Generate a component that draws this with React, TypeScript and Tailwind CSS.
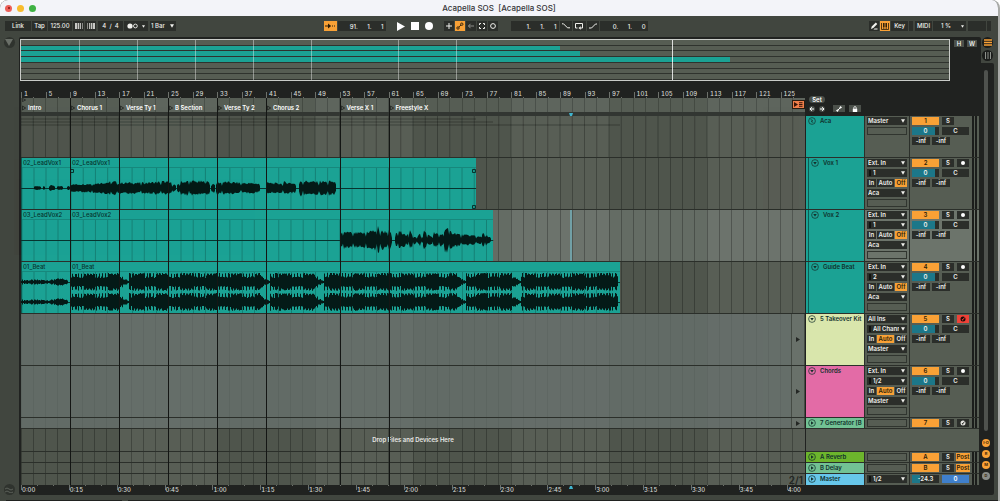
import { ReactNode } from "react";
import clsx from "clsx";

const BARS = 128;
const pct = (bars: number) => `${(bars / BARS) * 100}%`;

const LOCATORS = [
  { bar: 0, name: "Intro" },
  { bar: 8, name: "Chorus 1" },
  { bar: 16, name: "Verse Ty 1" },
  { bar: 24, name: "B Section" },
  { bar: 32, name: "Verse Ty 2" },
  { bar: 40, name: "Chorus 2" },
  { bar: 52, name: "Verse X 1" },
  { bar: 60, name: "Freestyle X" },
];

const PLAYHEAD = 89.8;

// [from, to, start amplitude, end amplitude], on a 784 wide timeline
type Segment = [number, number, number, number];

const VOX1: Segment[] = [
  [13, 20, 2, 2], [22, 24, 3, 2], [28, 34, 3, 3], [36, 42, 2, 2], [46, 49, 2, 3],
  [49, 71, 4, 5], [71, 90, 5, 7], [90, 96, 8, 7], [96, 120, 6, 6], [120, 140, 6, 7],
  [140, 151, 8, 6], [151, 155, 4, 4], [156, 159, 5, 5], [159, 168, 7, 8], [168, 189, 8, 7],
  [190, 194, 4, 6], [195, 201, 7, 6], [201, 220, 7, 6], [220, 239, 6, 5], [245, 262, 6, 5],
  [262, 275, 7, 5], [278, 282, 9, 8], [282, 298, 8, 7], [298, 307, 8, 7], [307, 315, 8, 7],
];

const VOX2: Segment[] = [
  [319, 322, 5, 9], [322, 332, 10, 8], [332, 345, 8, 8], [345, 356, 10, 11], [356, 359, 17, 13],
  [359, 367, 10, 10], [367, 371, 13, 5], [374, 377, 6, 10], [377, 385, 10, 8], [385, 388, 8, 5],
  [388, 392, 12, 6], [392, 396, 5, 3], [396, 400, 4, 8], [400, 402, 4, 4], [402, 406, 12, 8],
  [406, 412, 6, 4], [412, 418, 9, 6], [418, 423, 6, 8], [423, 428, 16, 12], [428, 440, 10, 6],
  [440, 455, 6, 5], [455, 461, 4, 5], [461, 464, 10, 6], [464, 470, 6, 3],
];

const BEAT_DIPS = [107, 248, 302, 444, 499];

// cheap repeatable noise so the waves look the same on each render
function noise(n: number) {
  const v = Math.sin(n * 12.9898) * 43758.5453;
  return v - Math.floor(v);
}

function wavePath(segments: Segment[], mid: number) {
  return segments
    .map(([from, to, a, b]) => {
      const top: string[] = [];
      const bottom: string[] = [];
      for (let x = from; x <= to; x += 1) {
        const amp = a + ((b - a) * (x - from)) / (to - from);
        const fade = x === from || x === to ? 0.5 : 1;
        top.push(`${x} ${(mid - amp * fade * (0.62 + noise(x) * 0.38)).toFixed(1)}`);
        bottom.unshift(`${x} ${(mid + amp * fade * (0.62 + noise(x + 400) * 0.38)).toFixed(1)}`);
      }
      return `M${top.join("L")}L${bottom.join("L")}Z`;
    })
    .join("");
}

function beatPath(mid: number) {
  let d = "";
  for (let x = 0; x < 47; x += 1) {
    const amp = (x > 32 && x < 44 ? 2 : 1) + noise(x) * 1.6;
    d += `M${x} ${mid - amp}h1v${amp * 2}h-1z`;
  }
  for (let x = 49; x < 597; x += 1) {
    const dense = Math.sin((x - 62) / 3.9) > 0.1;
    const hit = x % 3 === 0 || (dense && x % 3 === 1) || noise(x) > 0.85;
    let up = hit ? 8 + noise(x + 9) : dense ? 6.5 + noise(x) : 4 + noise(x) * 2;
    let down = hit ? 7.2 + noise(x + 5) * 1.6 : dense ? 6.5 : 4 + noise(x + 3);
    const dip = BEAT_DIPS.find((e) => x > e - 9 && x <= e);
    if (dip !== undefined) {
      up = 1 + (dip - x) * (0.25 + noise(x) * 0.5);
      down = up;
    }
    d += `M${x} ${(mid - up).toFixed(1)}h1v${(up + down).toFixed(1)}h-1z`;
  }
  return d;
}

type Clip = { name: string; from: number; to: number };

type Track = {
  name: string;
  id: string;
  kind: "group" | "audio" | "midi" | "folded" | "return";
  color: string;
  child?: boolean;
  selected?: boolean;
  input?: string;
  channel?: string;
  monitor?: string;
  output?: string;
  armed?: boolean;
  clips?: Clip[];
  waves?: string[];
  centers?: number[];
};

const TRACKS: Track[] = [
  { name: "Aca", id: "1", kind: "group", color: "bg-[#1ba294]", output: "Master" },
  {
    name: "Vox 1", id: "2", kind: "audio", color: "bg-[#1ba294]", child: true,
    input: "Ext. In", channel: "1", monitor: "Off", output: "Aca",
    clips: [{ name: "02_LeadVox1", from: 0, to: 8 }, { name: "02_LeadVox1", from: 8, to: 74.3 }],
    waves: [wavePath(VOX1, 30)], centers: [30],
  },
  {
    name: "Vox 2", id: "3", kind: "audio", color: "bg-[#1ba294]", child: true, selected: true,
    input: "Ext. In", channel: "1", monitor: "Off", output: "Aca",
    clips: [{ name: "03_LeadVox2", from: 0, to: 8 }, { name: "03_LeadVox2", from: 8, to: 77.1 }],
    waves: [wavePath(VOX2, 30)], centers: [30],
  },
  {
    name: "Guide Beat", id: "4", kind: "audio", color: "bg-[#1ba294]", child: true,
    input: "Ext. In", channel: "2", monitor: "Off", output: "Aca",
    clips: [{ name: "01_Beat", from: 0, to: 8 }, { name: "01_Beat", from: 8, to: 97.8 }],
    waves: [beatPath(20), beatPath(40)], centers: [20, 40],
  },
  {
    name: "5 Takeover Kit", id: "5", kind: "midi", color: "bg-[#d9e6ac]",
    input: "All Ins", channel: "All Channels", monitor: "Auto", output: "Master", armed: true,
  },
  {
    name: "Chords", id: "6", kind: "midi", color: "bg-[#e36ba6]",
    input: "Ext. In", channel: "1/2", monitor: "Auto", output: "Master",
  },
  { name: "7 Generator [B", id: "7", kind: "folded", color: "bg-[#72c294]" },
];

const RETURNS: Track[] = [
  { name: "A Reverb", id: "A", kind: "return", color: "bg-[#6cb52c]" },
  { name: "B Delay", id: "B", kind: "return", color: "bg-[#72c294]" },
];

const laneHeight = {
  group: "h-[42px]",
  audio: "h-[52px]",
  midi: "h-[52px]",
  folded: "h-[11px]",
  return: "h-[11px]",
};

/* ---------- small controls ---------- */

function Btn({ label, className, children }: { label?: string; className?: string; children?: ReactNode }) {
  return (
    <button aria-label={label} className={clsx("flex shrink-0 items-center justify-center whitespace-nowrap", className)}>
      {children}
    </button>
  );
}

function Field({ label, value, className }: { label: string; value: string; className?: string }) {
  return <input aria-label={label} defaultValue={value} className={clsx("min-w-0 outline-none", className)} />;
}

function Drop({ label, value, mark, className }: { label: string; value: string; mark?: boolean; className?: string }) {
  return (
    <label className={clsx("grid shrink-0 items-center bg-[#2b2e2a] text-[#f0f0ec]", className)}>
      <select
        aria-label={label}
        className={clsx("col-start-1 row-start-1 w-full appearance-none overflow-hidden pr-2 outline-none", mark ? "pl-1.5" : "pl-px")}
      >
        <option>{value}</option>
      </select>
      {mark && <span className="col-start-1 row-start-1 ml-0.5 h-1.5 w-0.5 bg-[#111311]" />}
      <svg viewBox="0 0 6 5" className="col-start-1 row-start-1 mr-0.5 h-1 w-1 justify-self-end fill-current">
        <path d="M0 0h6L3 5z" />
      </svg>
    </label>
  );
}

const dark = "bg-[#2b2e2a] text-[#f0f0ec]";
const orange = "bg-[#f9a136] text-[#2a1c08]";

/* ---------- transport ---------- */

function Transport() {
  return (
    <div className="flex h-[21px] items-center pb-px pl-[5px] pr-[7px]">
      <div className="flex h-[10px] gap-px">
        <Btn className={clsx(dark, "w-[26px]")}>Link</Btn>
        <Btn className={clsx(dark, "w-[15px]")}>Tap</Btn>
        <Field label="Tempo" value="125.00" className={clsx(dark, "w-[24px] text-center")} />
        {["down", "up"].map((dir) => (
          <Btn key={dir} label={`Nudge ${dir}`} className={clsx(dark, "w-[11px]")}>
            <svg viewBox="0 0 8 6" className={clsx("h-1.5 w-2 fill-current opacity-80", dir === "up" && "-scale-x-100")}>
              <path d="M0 0h2.4v6H0zM3 0h1.3v6H3zM5 0h.9v6H5zM7 0h.6v6H7z" />
            </svg>
          </Btn>
        ))}
        <Field label="Time signature" value="4  /  4" className={clsx(dark, "ml-px w-[25px] text-center")} />
        <Btn label="Metronome" className={clsx(dark, "w-[24px] gap-1")}>
          <svg viewBox="0 0 11 6" className="h-1.5 w-[11px]">
            <circle cx="3" cy="3" r="2.6" fill="currentColor" />
            <circle cx="8.4" cy="3" r="1.9" fill="none" stroke="currentColor" strokeWidth=".9" />
          </svg>
          <svg viewBox="0 0 6 5" className="h-[3px] w-[3px] fill-current"><path d="M0 0h6L3 5z" /></svg>
        </Btn>
        <Drop label="Quantization" value="1 Bar" className="ml-px w-[26px]" />
      </div>

      <div className="grow-[2]" />

      <div className="flex h-[10px] items-center">
        <Btn label="Follow" className={clsx(orange, "h-full w-[13px]")}>
          <svg viewBox="0 0 10 6" className="h-1.5 w-[10px]" fill="currentColor">
            <path d="M0 2.5h3V.5L6.2 3 3 5.5v-2H0zM7 2.5h1v1H7zM9 2.5h1v1H9z" />
          </svg>
        </Btn>
        <Field label="Arrangement position" value="91.      1.      1" className={clsx(dark, "ml-px h-full w-[48px] pr-0.5 text-right")} />
        <Btn label="Play" className="ml-[10px] h-full w-[10px] text-white">
          <svg viewBox="0 0 8 9" className="h-[9px] w-2 fill-current"><path d="M0 0l8 4.5L0 9z" /></svg>
        </Btn>
        <Btn label="Stop" className="ml-1 h-full w-[10px]">
          <span className="size-2 bg-white" />
        </Btn>
        <Btn label="Record" className="ml-1 h-full w-[10px]">
          <span className="size-2 rounded-full bg-white" />
        </Btn>
        <div className="ml-[10px] flex h-full gap-px">
          <Btn label="Overdub" className={clsx(dark, "w-[10px]")}>
            <svg viewBox="0 0 6 6" className="size-1.5" stroke="currentColor"><path d="M3 0v6M0 3h6" /></svg>
          </Btn>
          <Btn label="Automation arm" className={clsx(orange, "w-[10px]")}>
            <svg viewBox="0 0 8 8" className="size-2" fill="none" stroke="currentColor" strokeWidth=".9">
              <circle cx="2" cy="6" r="1.2" /><circle cx="5.8" cy="2.2" r="1.2" /><path d="M2.8 5.1L5 3" />
            </svg>
          </Btn>
          <Btn label="Re-enable automation" className={clsx(dark, "w-[10px]")}>
            <svg viewBox="0 0 8 6" className="h-1.5 w-2 opacity-50" fill="none" stroke="currentColor">
              <path d="M7 3H1.5M3.5.8L1.5 3l2 2.2" />
            </svg>
          </Btn>
          <Btn label="Capture MIDI" className={clsx(dark, "w-[10px]")}>
            <svg viewBox="0 0 8 8" className="size-2" fill="none" stroke="currentColor">
              <path d="M1.5 3V1.5H3M5 1.5h1.5V3M6.5 5v1.5H5M3 6.5H1.5V5" />
            </svg>
          </Btn>
          <Btn label="Session record" className={clsx(dark, "w-[10px]")}>
            <svg viewBox="0 0 8 8" className="size-2" fill="none" stroke="currentColor"><circle cx="4" cy="4" r="2.4" /></svg>
          </Btn>
        </div>
        <Field label="Loop start" value="1.      1.      1" className={clsx(dark, "ml-[13px] h-full w-[48px] pr-0.5 text-right")} />
        <Btn label="Punch in" className={clsx(dark, "ml-px h-full w-3")}>
          <svg viewBox="0 0 10 6" className="h-1.5 w-[10px]" fill="none" stroke="currentColor"><path d="M1 .8h1.5l4 4H9" /></svg>
        </Btn>
        <Btn label="Loop" className={clsx(dark, "ml-px h-full w-[13px]")}>
          <svg viewBox="0 0 10 8" className="h-2 w-[10px]" fill="none" stroke="currentColor">
            <path d="M3.5 6H1.5V1.5h7V6H7" /><path d="M6.8 4.2L4.4 6l2.4 1.8z" fill="currentColor" stroke="none" />
          </svg>
        </Btn>
        <Btn label="Punch out" className={clsx(dark, "ml-px h-full w-3")}>
          <svg viewBox="0 0 10 6" className="h-1.5 w-[10px]" fill="none" stroke="currentColor"><path d="M1 5h2.5l4-4H9" /></svg>
        </Btn>
        <Field label="Loop length" value="0.      1.      0" className={clsx(dark, "ml-px h-full w-[48px] pr-0.5 text-right")} />
      </div>

      <div className="grow-[3]" />

      <div className="flex h-[10px] gap-px">
        <Btn label="Draw mode" className={clsx(dark, "w-[10px]")}>
          <svg viewBox="0 0 8 8" className="size-2 fill-current"><path d="M1 7l.7-2.5L5.8.5l1.5 1.5-4 4zM4.5 6.5h3v1h-4z" /></svg>
        </Btn>
        <Btn label="Computer MIDI keyboard" className={clsx(orange, "w-[10px]")}>
          <svg viewBox="0 0 8 8" className="size-2" fill="none" stroke="currentColor">
            <path d="M.5 1v6.5h7V1M2.8 5v2M5.2 5v2" strokeWidth=".8" /><path d="M2.8 1v4M5.2 1v4" strokeWidth="1.5" />
          </svg>
        </Btn>
        <Btn className={clsx(dark, "w-[17px]")}>Key</Btn>
        <div className="w-1 bg-[#2b2e2a]" />
        <Btn className={clsx(dark, "ml-px w-[17px]")}>MIDI</Btn>
        <label className="grid w-[33px] items-center bg-[#2b2e2a] text-[#f0f0ec]">
          <select aria-label="CPU load" className="col-start-1 row-start-1 appearance-none pl-2 outline-none">
            <option>1 %</option>
          </select>
          <svg viewBox="0 0 6 5" className="col-start-1 row-start-1 mr-0.5 h-[3px] w-[3px] justify-self-end fill-current">
            <path d="M0 0h6L3 5z" />
          </svg>
        </label>
        <div className="ml-px w-[18px] bg-[#2b2e2a]" />
        <div className="w-1 bg-[#2b2e2a]" />
      </div>
    </div>
  );
}

/* ---------- overview ---------- */

function Overview() {
  const rows = [0, 74.3, 77.1, 97.8, 0, 0, 0];
  return (
    <div className="flex gap-1 pl-px">
      <div className="relative flex h-[42px] min-w-0 flex-1 flex-col border border-[#c9ccc8] bg-[#2f332e]">
        {rows.map((len, i) => (
          <div key={i} className="mb-px flex-1 bg-[#565d53]">
            <div className="h-full bg-[#1ba294]" style={{ width: pct(len) }} />
          </div>
        ))}
        {LOCATORS.slice(1).map((l) => (
          <div key={l.bar} className="absolute inset-y-0 w-px bg-white/40" style={{ left: pct(l.bar) }} />
        ))}
        <div className="absolute inset-y-0 w-px bg-white/80" style={{ left: pct(PLAYHEAD) }} />
      </div>
      <div className="flex w-[27px] gap-[3px] pt-px">
        <Btn className="h-[7px] w-[10px] bg-[#4b504a] text-white">H</Btn>
        <Btn className="h-[7px] w-[10px] bg-[#4b504a] text-white">W</Btn>
      </div>
    </div>
  );
}

/* ---------- timeline ---------- */

function Bands({ className }: { className?: string }) {
  return (
    <div className={clsx("absolute inset-0 flex", className)}>
      {Array.from({ length: 8 }, (_, i) => (
        <div key={i} className={clsx("flex-1", i % 2 === 1 && "bg-white/5")} />
      ))}
    </div>
  );
}

function Grid({ from = 0, to = BARS, className }: { from?: number; to?: number; className?: string }) {
  const lines: number[] = [];
  for (let b = Math.ceil(from / 2) * 2; b < to; b += 2) lines.push(b);
  return (
    <svg viewBox={`${from} 0 ${to - from} 1`} preserveAspectRatio="none" className={clsx("size-full", className)}>
      {lines.map((b) => (
        <path key={b} d={`M${b} 0v1`} stroke="#000" vectorEffect="non-scaling-stroke" shapeRendering="crispEdges" />
      ))}
    </svg>
  );
}

function PlayCell() {
  return (
    <button aria-label="Back to arrangement" className="absolute inset-y-0 right-0 flex w-[14px] items-center justify-center border-x border-[#454b44] bg-[#69716a]">
      <svg viewBox="0 0 4 5" className="h-[5px] w-1 fill-[#242724]"><path d="M0 0l4 2.5L0 5z" /></svg>
    </button>
  );
}

function Lane({ track }: { track: Track }) {
  const soft = track.kind === "midi" || track.kind === "folded";
  return (
    <div
      className={clsx(
        "relative border-b border-[#2b2f2a]",
        laneHeight[track.kind],
        soft ? "bg-[#626b66]" : track.selected ? "bg-[#646c64]" : "bg-[#4f554c]"
      )}
    >
      <Bands className={soft ? "opacity-40" : undefined} />
      <div className="absolute inset-0">
        <Grid className={soft ? "opacity-5" : "opacity-25"} />
      </div>
      {track.kind === "group" && (
        <div className="absolute inset-x-0 top-0.5 flex flex-col gap-px">
          {[74.3, 77.1, 97.8].map((len) => (
            <div key={len} className="h-0.5 bg-black/15" style={{ width: pct(len) }} />
          ))}
        </div>
      )}
      {track.clips?.map((c) => (
        <div
          key={c.from}
          className="absolute inset-y-0 flex flex-col border-l border-[#0e5c53] bg-[#1ba294]"
          style={{ left: pct(c.from), width: pct(c.to - c.from) }}
        >
          <span className="h-[10px] shrink-0 truncate border-b border-[#17887c] pl-px font-medium leading-[10px] text-[#07332e]">{c.name}</span>
          <div className="min-h-0 flex-1">
            <Grid from={c.from} to={c.to} className="opacity-20" />
          </div>
        </div>
      ))}
      {track.waves && (
        <svg viewBox="0 0 784 52" preserveAspectRatio="none" className="absolute inset-x-0 top-0 h-[52px] w-full">
          {track.centers?.map((y) => (
            <path key={y} d={`M0 ${y + 0.5}H${(track.clips![1].to / BARS) * 784}`} stroke="#06342f" />
          ))}
          {track.waves.map((d, i) => (
            <path key={i} d={d} fill="#041a17" />
          ))}
          {track.id === "2" && (
            <path d="M49.5 11.5h3v3h-3zM451.5 11.5h3v3h-3zM451.5 47.5h3v3h-3z" fill="none" stroke="#06342f" />
          )}
        </svg>
      )}
      {track.selected && <div className="absolute inset-y-0 w-0.5 -translate-x-1/2 bg-[#71a0a6]" style={{ left: pct(PLAYHEAD) }} />}
      {soft && <PlayCell />}
    </div>
  );
}

function BarRuler() {
  return (
    <div className="relative h-[17px] tabular-nums text-[#d2d5d0]">
      {Array.from({ length: 32 }, (_, i) => (
        <span key={i} className="absolute bottom-0 h-1.5 border-l border-[#6d716b] pl-0.5 leading-1" style={{ left: pct(i * 4) }}>
          {i * 4 + 1}
        </span>
      ))}
      {Array.from({ length: 32 }, (_, i) => (
        <span key={i} className="absolute bottom-0 h-px w-px bg-[#6d716b]" style={{ left: pct(i * 4 + 2) }} />
      ))}
    </div>
  );
}

function ScrubArea() {
  return (
    <div className="relative h-[14px] bg-[#565d54]">
      <Bands />
      <div className="absolute inset-0"><Grid className="opacity-20" /></div>
      <svg viewBox="0 0 5 5" className="absolute left-px top-0 size-1" fill="none" stroke="#222"><path d="M.5.5l4 2-4 2z" /></svg>
      {LOCATORS.map((l) => (
        <button key={l.name} className="absolute bottom-0 flex h-2 items-center gap-0.5 pl-px font-semibold text-white" style={{ left: pct(l.bar) }}>
          <svg viewBox="0 0 5 6" className="h-1.5 w-1" fill="none" stroke="#1c1e1c"><path d="M.5.5l4 2.5-4 2.5z" /></svg>
          {l.name}
        </button>
      ))}
      <button aria-label="Back to arrangement" className="absolute right-0 top-0.5 flex h-[9px] w-[13px] items-center justify-center border border-[#2a1c10] bg-[#f07f4b]">
        <svg viewBox="0 0 9 5" className="h-[5px] w-[9px] fill-[#3a1608]"><path d="M0 0l4 2.5L0 5zM5 .2h3.5v1H5zM5 2h3.5v1H5zM5 3.8h3.5v1H5z" /></svg>
      </button>
    </div>
  );
}

function TimeRuler() {
  const bar = 7.8125; // bars in 15 seconds at 125 bpm
  return (
    <div className="relative h-[10px] tabular-nums text-[#d2d5d0]">
      {Array.from({ length: 17 }, (_, i) => (
        <span key={i} className="absolute top-0 h-[5px] border-l border-[#6d716b] leading-[9px]" style={{ left: pct(i * bar) }}>
          {Math.floor(i / 4)}:{String((i % 4) * 15).padStart(2, "0")}
        </span>
      ))}
      {Array.from({ length: 48 }, (_, i) => (
        <span key={i} className="absolute top-0 h-px w-px bg-[#6d716b]" style={{ left: pct((i * bar) / 3) }} />
      ))}
      <svg viewBox="0 0 4 3" className="absolute top-px h-[3px] w-1 -translate-x-1/2 fill-[#3fb5cf]" style={{ left: pct(PLAYHEAD) }}>
        <path d="M1 0h2l1 3H0z" />
      </svg>
    </div>
  );
}

function Timeline() {
  return (
    <div className="min-w-0 flex-1">
      <BarRuler />
      <div className="relative">
        <ScrubArea />
        <div className="relative h-1 bg-[#323632]">
          <svg viewBox="0 0 4 3" className="absolute top-px h-[3px] w-1 -translate-x-1/2 fill-[#3fb5cf]" style={{ left: pct(PLAYHEAD) }}>
            <path d="M0 0h4L3 3H1z" />
          </svg>
        </div>
        {TRACKS.map((t) => <Lane key={t.id} track={t} />)}
        <div className="relative flex h-[23px] items-center justify-center border-b border-[#2b2f2a] bg-[#4f554c]">
          <Bands />
          <div className="absolute inset-0"><Grid className="opacity-25" /></div>
          <span className="relative font-semibold text-[#e8e9e6]">Drop Files and Devices Here</span>
        </div>
        {RETURNS.map((t) => <Lane key={t.id} track={t} />)}
        <div className="relative flex h-[11px] items-center justify-end bg-[#4f554c]">
          <Bands />
          <div className="absolute inset-0"><Grid className="opacity-25" /></div>
          <span className="relative pr-0.5 text-[10px] font-semibold leading-[10px] text-[#232623]">2/1</span>
        </div>
        {LOCATORS.slice(1).map((l) => (
          <div key={l.bar} className="pointer-events-none absolute inset-y-0 w-px bg-[#141614]" style={{ left: pct(l.bar) }} />
        ))}
      </div>
      <TimeRuler />
    </div>
  );
}

/* ---------- track headers ---------- */

function FoldIcon({ kind }: { kind: Track["kind"] | "master" }) {
  return (
    <svg viewBox="0 0 9 9" className="size-2 shrink-0" fill="none" stroke="#14302b">
      <circle cx="4.5" cy="4.5" r="3.8" strokeWidth=".8" />
      {kind === "group" && <path d="M3 3l2.5 1M3.4 5l2.5 1" />}
      {(kind === "audio" || kind === "midi") && <path d="M2.5 3.5h4l-2 2.6z" fill="#14302b" stroke="none" />}
      {(kind === "folded" || kind === "return" || kind === "master") && <path d="M3.4 2.4v4.2l3-2.1z" fill="#14302b" stroke="none" />}
    </svg>
  );
}

function EmptySlot() {
  return <div className="h-2 shrink-0 border border-[#30352f]" />;
}

function Meter() {
  return (
    <div className="ml-auto flex h-full w-[7px] shrink-0 gap-px">
      <div className="h-full w-0.5 bg-[#1b1d1b]" />
      <div className="h-full w-0.5 bg-[#1b1d1b]" />
    </div>
  );
}

function ArmIcon({ track }: { track: Track }) {
  if (track.kind === "audio" || track.id === "6") return <span className="size-1 rounded-full bg-white" />;
  return (
    <svg viewBox="0 0 6 6" className="size-1.5">
      <circle cx="3" cy="3" r="2.5" fill={track.armed ? "#1c0b09" : "#e4e4e0"} />
      <path d="M3 3.5L4.5 1.5" stroke={track.armed ? "#ef4238" : "#2b2e2a"} />
      <circle cx="2.6" cy="3.8" r=".8" fill={track.armed ? "#ef4238" : "#2b2e2a"} />
    </svg>
  );
}

function HeaderRow({ track }: { track: Track }) {
  const { kind } = track;
  const tall = kind === "audio" || kind === "midi";
  return (
    <div className={clsx("flex border-b border-[#2b2f2a]", laneHeight[kind], track.selected ? "bg-[#6c746b]" : "bg-[#565d53]")}>
      <div className={clsx("flex w-[58px] shrink-0 text-[#10302b]", track.color)}>
        <div
          className={clsx(
            "flex min-w-0 flex-1 items-start gap-1 overflow-hidden whitespace-nowrap pl-0.5 pt-px leading-2",
            track.child && "ml-0.5 border-l border-[#0e5c53]"
          )}
        >
          <FoldIcon kind={kind} />
          {track.name}
        </div>
      </div>

      <div className="flex w-[46px] shrink-0 flex-col gap-0.5 border-x border-[#2b2f2a] px-0.5 pt-px">
        {kind === "group" && <Drop label={`${track.name} output`} value="Master" className="h-2" />}
        {tall && (
          <>
            <Drop label={`${track.name} input type`} value={track.input!} className="h-2" />
            <Drop label={`${track.name} input channel`} value={track.channel!} mark className="h-2" />
            <div className="flex h-2 justify-between">
              {["In", "Auto", "Off"].map((m) => (
                <Btn key={m} className={clsx(m === track.monitor ? orange : dark, m === "In" ? "w-[9px]" : m === "Auto" ? "w-[17px]" : "w-3")}>
                  {m}
                </Btn>
              ))}
            </div>
            <Drop label={`${track.name} output`} value={track.output!} className="h-2" />
          </>
        )}
        <EmptySlot />
      </div>

      <div className="flex min-w-0 flex-1 pl-0.5">
        <div className="flex w-[57px] shrink-0 flex-col gap-0.5 pt-px">
          <div className="flex h-2 gap-[3px]">
            <Btn label={`Track ${track.id} activator`} className={clsx(orange, "w-[27px]")}>{track.id}</Btn>
            <Btn className={clsx(dark, "w-3")}>S</Btn>
            {(tall || kind === "folded") && (
              <Btn label={`Arm ${track.name}`} className={clsx("w-3", track.armed ? "bg-[#ef4238]" : "bg-[#2b2e2a]")}>
                <ArmIcon track={track} />
              </Btn>
            )}
            {kind === "return" && <Btn className={clsx(orange, "-ml-px w-[14px]")}>Post</Btn>}
          </div>
          {(tall || kind === "group") && (
            <>
              <div className="flex h-2 gap-[3px]">
                <Field label={`${track.name} volume`} value="0" className="w-[27px] bg-linear-to-r from-[#1c7789] from-85% to-[#2b2e2a] to-85% text-center text-[#f0f0ec]" />
                <Field label={`${track.name} pan`} value="C" className={clsx(dark, "w-[27px] text-center")} />
              </div>
              <div className="flex h-2 gap-0.5 leading-2 text-[#f0f0ec]">
                <span className="w-[18px] bg-[#2b2e2a] text-center">-inf</span>
                <span className="w-[18px] bg-[#2b2e2a] text-center">-inf</span>
              </div>
            </>
          )}
        </div>
        <Meter />
      </div>
    </div>
  );
}

function TrackHeaders() {
  return (
    <div className="w-[173px] shrink-0 font-semibold">
      <div className="flex h-[35px] flex-col items-start gap-0.5 pl-[3px] pt-[15px]">
        <Btn className="h-[7px] w-[16px] rounded-full bg-[#4b504a] text-white">Set</Btn>
        <div className="flex items-center">
          {["M5 3H1M2.8 1.2L1 3l1.8 1.8", "M1 3h4M3.2 1.2L5 3 3.2 4.8"].map((d, i) => (
            <Btn key={d} label={i ? "Next locator" : "Previous locator"} className="mr-1 size-1.5 rounded-full bg-[#4b504a]">
              <svg viewBox="0 0 6 6" className="size-1.5" fill="none" stroke="#fff"><path d={d} /></svg>
            </Btn>
          ))}
          <Btn label="Automation mode" className="ml-1 h-[7px] w-3 bg-[#4b504a]">
            <svg viewBox="0 0 6 6" className="size-1.5" stroke="#fff" fill="#fff"><path d="M1.5 4.5l3-3" /><circle cx="1.4" cy="4.6" r=".7" /><circle cx="4.6" cy="1.4" r=".7" /></svg>
          </Btn>
          <Btn label="Lock envelopes" className="ml-1 h-[7px] w-3 bg-[#4b504a]">
            <svg viewBox="0 0 6 6" className="size-1.5" fill="none" stroke="#fff"><path d="M1.8 3V1.8a1.2 1.2 0 0 1 2.4 0V3" strokeWidth=".8" /><path d="M.8 2.8h4.4V6H.8z" fill="#fff" stroke="none" /></svg>
          </Btn>
        </div>
      </div>
      {TRACKS.map((t) => <HeaderRow key={t.id} track={t} />)}
      <div className="h-[23px] border-b border-[#2b2f2a] bg-[#565d53]" />
      {RETURNS.map((t) => <HeaderRow key={t.id} track={t} />)}
      <div className="flex h-[11px] bg-[#565d53]">
        <div className="flex w-[58px] shrink-0 gap-1 bg-[#67c7ea] pl-0.5 pt-px leading-2 text-[#10302b]">
          <FoldIcon kind="master" />
          Master
        </div>
        <div className="w-[46px] shrink-0 border-x border-[#2b2f2a] px-0.5 pt-px">
          <Drop label="Master output" value="1/2" mark className="h-2" />
        </div>
        <div className="flex min-w-0 flex-1 pl-0.5">
          <div className="flex h-[9px] gap-[3px] pt-px">
            <Field label="Master volume" value="-24.3" className="w-[27px] bg-linear-to-r from-[#1c7789] from-30% to-[#2b2e2a] to-30% text-center text-[#f0f0ec]" />
            <Field label="Cue volume" value="0" className="w-[27px] bg-[#3f7fcb] text-center text-white" />
          </div>
          <Meter />
        </div>
      </div>
    </div>
  );
}

/* ---------- right rail ---------- */

function Rail() {
  return (
    <div className="flex w-[13px] shrink-0 flex-col">
      <div className="flex h-[26px] flex-col items-center gap-0.5">
        <Btn label="Arrangement view" className="size-[11px] rounded-full bg-[#1b1d1b]">
          <svg viewBox="0 0 8 7" className="h-[7px] w-2" stroke="#f9a136" strokeWidth="1.4"><path d="M0 1h8M0 3.5h8M0 6h8" /></svg>
        </Btn>
        <Btn label="Session view" className="size-[11px] rounded-full bg-[#1b1d1b]">
          <svg viewBox="0 0 8 7" className="h-[7px] w-2" stroke="#8d918b"><path d="M1.5 0v7M4 0v7M6.5 0v7" /></svg>
        </Btn>
      </div>
      <div className="flex flex-1 flex-col items-center rounded-r-xs bg-[#202220] pb-[15px] pr-[3px] pt-[7px]">
        <div className="w-1 flex-1 rounded-full bg-[#4f524e]" />
        <div className="mt-2 flex flex-col gap-[3px]">
          {["I·O", "R", "M", "D"].map((t) => (
            <Btn key={t} className={clsx("size-2 rounded-full text-[4px] font-bold text-[#3a2508]", t === "D" ? "bg-[#8a8d88]" : "bg-[#f9a136]")}>{t}</Btn>
          ))}
        </div>
      </div>
    </div>
  );
}

export default function App() {
  return (
    <div className="flex min-h-screen flex-col overflow-hidden rounded-t-lg border-r-2 border-[#a9aba8] bg-[#41463f] font-['Inter','Liberation_Sans',sans-serif] text-[6px] font-medium leading-2">
      <header className="grid h-4 shrink-0 grid-cols-[1fr_auto_1fr] items-center bg-[#f3f4f9] px-[5px]">
        <div className="flex gap-[5px]">
          <button aria-label="Close" className="flex size-[7px] items-center justify-center rounded-full bg-[#ed5f58]">
            <span className="size-0.5 rounded-full bg-[#7c1713]" />
          </button>
          <button aria-label="Minimize" className="size-[7px] rounded-full bg-[#f8bc2e]" />
          <button aria-label="Zoom" className="size-[7px] rounded-full bg-[#3fb244]" />
        </div>
        <h1 className="whitespace-pre text-[8px] font-medium text-[#333438]">Acapella SOS  [Acapella SOS]</h1>
      </header>

      <Transport />

      <main className="flex flex-1 pr-1">
        <aside className="flex w-[19px] shrink-0 flex-col items-center justify-between pr-px">
          <Btn label="Show browser" className="size-[11px] rounded-full bg-[#2f332e]">
            <svg viewBox="0 0 8 7" className="h-[7px] w-2 fill-[#6a6f68]"><path d="M0 0h8L4 7z" /></svg>
          </Btn>
          <Btn label="Groove pool" className="size-[11px] rounded-full bg-[#2f332e]">
            <svg viewBox="0 0 8 6" className="h-1.5 w-2" fill="none" stroke="#5c615a"><path d="M0 2q2-2 4 0t4 0M0 5q2-2 4 0t4 0" /></svg>
          </Btn>
        </aside>
        <div className="flex min-w-0 flex-1 flex-col rounded-bl-xs rounded-tl-xs rounded-tr-xs bg-[#202220] pt-0.5">
          <Overview />
          <div className="flex gap-px pl-0.5 pr-0.5">
            <Timeline />
            <TrackHeaders />
          </div>
        </div>
        <Rail />
      </main>

      <footer className="flex h-1.5 shrink-0 items-end gap-1.5 pl-1.5">
        <div className="h-px w-[116px] bg-[#202220]" />
        <div className="h-px flex-1 bg-[#202220]" />
      </footer>
    </div>
  );
}
